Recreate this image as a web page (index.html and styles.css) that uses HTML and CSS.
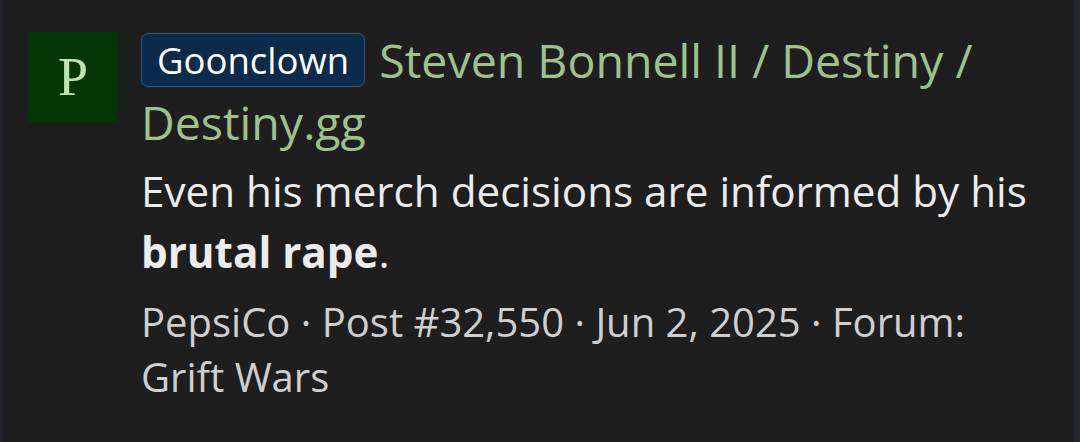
FILE: index.html
```html
<!DOCTYPE html>
<html lang="en">
  <head>
    <meta charset="UTF-8" />
    <meta name="viewport" content="width=device-width, initial-scale=1.0" />
    <title>Post</title>
    <link rel="stylesheet" href="styles.css">
  </head>
  <body>
    <div class="post">
      <!-- avatar -->
      <div class="avatar">P</div>

      <div class="post-main">
        <div class="post-title">
          <span class="badge">Goonclown</span>
          Steven Bonnell II / Destiny / Destiny.gg
        </div>

        <div class="post-body">
          Even his merch decisions are informed by his <strong>brutal rape</strong>.
        </div>

        <div class="post-meta">
          PepsiCo · Post #32,550 · Jun 2, 2025 · Forum: Grift Wars
        </div>
      </div>
    </div>
  </body>
</html>
```

FILE: styles.css
```css
* {
  margin: 0;
  padding: 0;
  box-sizing: border-box;
}

html,
body {
  height: 100%;
}

body {
  background-color: #1e1e1e;
  font-family: "Open Sans", "Noto Sans", sans-serif;
  border-left: 3px solid #22232b;
  border-right: 6px solid #25262b;
}

.post {
  display: flex;
  gap: 24px;
  padding: 29px 36px 0 25px;
}

.avatar {
  flex: none;
  width: 90px;
  height: 90px;
  margin-top: 3px;
  background-color: #043604;
  color: #c4dfb0;
  font-family: "Liberation Serif", "DejaVu Serif", serif;
  font-size: 54px;
  line-height: 90px;
  text-align: center;
}

.post-main {
  flex: 1;
  margin-left: -1px;
}

.post-title {
  font-size: 46.5px;
  line-height: 62px;
  color: #9fc28d;
}

.badge {
  display: inline-block;
  vertical-align: 4px;
  margin-right: 2px;
  padding: 0 15px;
  font-size: 36.5px;
  line-height: 52px;
  color: #ffffff;
  background-color: #0b2b4a;
  border: 1px solid #2f5a7e;
  border-radius: 7px;
}

.post-body {
  margin-top: 7px;
  font-size: 42.2px;
  line-height: 61px;
  color: #ececec;
}

.post-body strong {
  font-weight: 700;
}

.post-meta {
  margin-top: 12px;
  font-size: 40px;
  line-height: 55px;
  color: #cfcfcf;
}
```
